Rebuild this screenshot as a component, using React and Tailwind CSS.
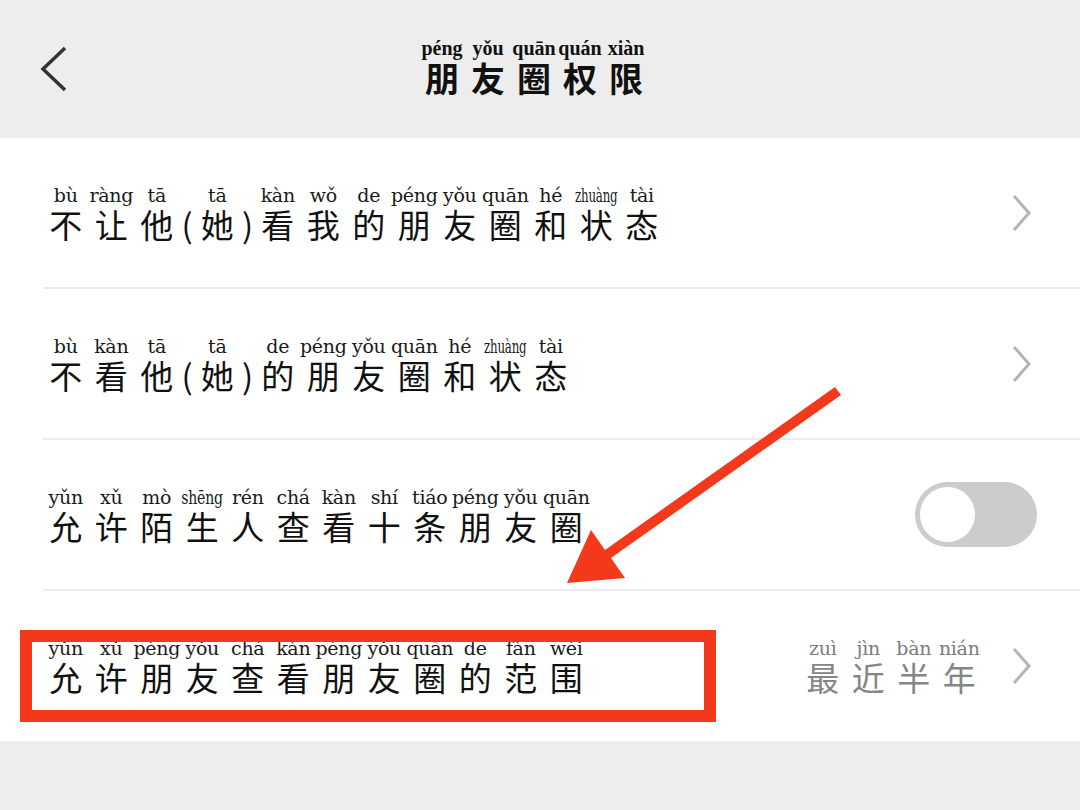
import React from "react";

const CJK = { fontFamily: '"Noto Sans CJK SC", "Noto Sans", sans-serif' };
const PY = { fontFamily: '"DejaVu Serif", "Liberation Serif", serif' };
const PY_TITLE = { fontFamily: '"Liberation Serif", "DejaVu Serif", serif' };

const rows = [
  {
    items: [
      ["bù", "不"], ["ràng", "让"], ["tā", "他"], ["", "("], ["tā", "她"], ["", ")"],
      ["kàn", "看"], ["wǒ", "我"], ["de", "的"], ["péng", "朋"], ["yǒu", "友"], ["quān", "圈"],
      ["hé", "和"], ["zhuàng", "状"], ["tài", "态"],
    ],
    right: "chevron",
  },
  {
    items: [
      ["bù", "不"], ["kàn", "看"], ["tā", "他"], ["", "("], ["tā", "她"], ["", ")"],
      ["de", "的"], ["péng", "朋"], ["yǒu", "友"], ["quān", "圈"], ["hé", "和"],
      ["zhuàng", "状"], ["tài", "态"],
    ],
    right: "chevron",
  },
  {
    items: [
      ["yǔn", "允"], ["xǔ", "许"], ["mò", "陌"], ["shēng", "生"], ["rén", "人"], ["chá", "查"],
      ["kàn", "看"], ["shí", "十"], ["tiáo", "条"], ["péng", "朋"], ["yǒu", "友"], ["quān", "圈"],
    ],
    right: "toggle",
  },
  {
    items: [
      ["yǔn", "允"], ["xǔ", "许"], ["péng", "朋"], ["yǒu", "友"], ["chá", "查"], ["kàn", "看"],
      ["péng", "朋"], ["yǒu", "友"], ["quān", "圈"], ["de", "的"], ["fàn", "范"], ["wéi", "围"],
    ],
    right: "value",
    last: true,
  },
];

function Pinyin({ py }) {
  // long syllables are printed in a condensed face in the reference
  if (py === "zhuàng") return <span className="inline-block scale-x-[0.62]">{py}</span>;
  if (py === "shēng") return <span className="inline-block scale-x-[0.74]">{py}</span>;
  return py || "\u00a0";
}

function Ruby({ items, gray = false }) {
  return (
    <div className="flex items-end">
      {items.map(([py, ch], i) => {
        const paren = ch === "(" || ch === ")";
        return (
          <div
            key={i}
            className={`flex flex-col items-center ${paren ? "w-[15px]" : "w-[45.5px]"}`}
          >
            <span
              style={PY}
              className={`text-[19px] leading-[22px] whitespace-nowrap tracking-[-0.3px] ${
                gray ? "text-[#7c7c7c]" : "text-[#1a1a1a]"
              }`}
            >
              <Pinyin py={py} />
            </span>
            <span
              style={CJK}
              className={`text-[33px] leading-[36px] ${gray ? "text-[#868686]" : "text-[#111]"}`}
            >
              {ch}
            </span>
          </div>
        );
      })}
    </div>
  );
}

function Chevron() {
  return (
    <svg width="20" height="38" viewBox="0 0 20 38" className="shrink-0">
      <polyline points="2,2 17,19 2,36" fill="none" stroke="#b4b4b4" strokeWidth="3" />
    </svg>
  );
}

function Toggle() {
  return (
    <div className="w-[122px] h-[65px] rounded-full bg-[#cccccc] p-[5px] flex items-center">
      <div className="w-[55px] h-[55px] rounded-full bg-white" />
    </div>
  );
}

export default function App() {
  return (
    <div className="relative w-[1080px] h-[810px] overflow-hidden bg-[#ededed]">
      {/* Header */}
      <div className="h-[138px] grid grid-cols-[1fr_auto_1fr] items-center">
        <div className="pl-[40px]">
          <svg width="28" height="46" viewBox="0 0 28 46">
            <polyline points="25,2 3,23 25,44" fill="none" stroke="#333" strokeWidth="3.5" />
          </svg>
        </div>
        <div className="flex items-end pb-[4px] pr-[12px]">
          {[["péng", "朋"], ["yǒu", "友"], ["quān", "圈"], ["quán", "权"], ["xiàn", "限"]].map(
            ([py, ch], i) => (
              <div key={i} className="flex flex-col items-center w-[46px]">
                <span
                  style={PY_TITLE}
                  className="text-[20px] leading-[22px] font-bold text-[#111] whitespace-nowrap"
                >
                  {py}
                </span>
                <span style={CJK} className="text-[34px] leading-[38px] font-bold text-[#111]">
                  {ch}
                </span>
              </div>
            )
          )}
        </div>
        <div />
      </div>

      {/* List */}
      <div className="bg-white">
        {rows.map((row, idx) => (
          <div key={idx} className="pl-[43px]">
            <div
              className={`flex items-center justify-between ${
                row.last ? "h-[150px]" : "h-[151px] border-b-2 border-[#ececec]"
              } ${row.right === "toggle" ? "pr-[43px]" : "pr-[48px]"}`}
            >
              <Ruby items={row.items} />
              {row.right === "chevron" && <Chevron />}
              {row.right === "toggle" && <Toggle />}
              {row.right === "value" && (
                <div className="flex items-center gap-[30px]">
                  <Ruby
                    gray
                    items={[["zuì", "最"], ["jìn", "近"], ["bàn", "半"], ["nián", "年"]]}
                  />
                  <Chevron />
                </div>
              )}
            </div>
          </div>
        ))}
      </div>

      {/* Annotation overlay */}
      <div className="absolute left-[20px] top-[630px] w-[696px] h-[92px] border-[12px] border-[#f3381b]" />
      <svg className="absolute left-0 top-0" width="1080" height="810" viewBox="0 0 1080 810">
        <polygon
          points="835,387 841,395 611,558 625,578 567,583 591,530 605,550"
          fill="#f3381b"
        />
      </svg>
    </div>
  );
}
